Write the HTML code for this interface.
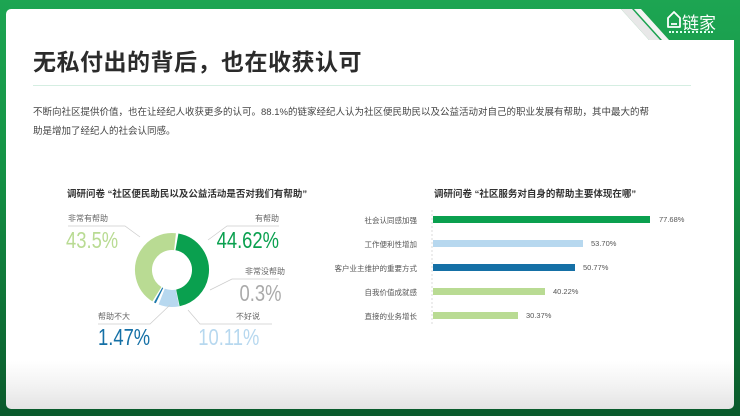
<!DOCTYPE html><html><head><meta charset="utf-8"><style>
*{margin:0;padding:0;box-sizing:border-box}
body{width:740px;height:416px;overflow:hidden;background:linear-gradient(#1da552 0%,#149245 40%,#0a5a2c 100%);font-family:"Liberation Sans","Noto Sans CJK SC",sans-serif;position:relative}
.card{position:absolute;left:6px;top:9px;width:728px;height:400px;background:linear-gradient(#fff 0%,#fff 88%,#f3f3f3 94%,#e4e4e4 100%);border-radius:5px;clip-path:polygon(0 0,615px 0,643px 31px,728px 31px,728px 100%,0 100%)}
.t{position:absolute;color:#333;white-space:nowrap}
.logo{position:absolute;left:682px;top:9px;color:#fff;font-size:17px;font-family:"Noto Sans CJK SC",sans-serif}
.sub{position:absolute;left:669px;top:31px;width:44px;height:2px;border-top:2px dotted #dfe}
.n{position:absolute;font-size:23px;white-space:nowrap;transform:scaleX(0.8);line-height:1}
.l{transform-origin:left}.r{transform-origin:right;text-align:right}
</style></head><body>
<div class="card"></div>
<svg style="position:absolute;left:0;top:0" width="740" height="60"><polygon points="621,9 632,9 660,40 649,40" fill="#e8e8e8"/><polygon points="634,9 641,9 669,40 662,40" fill="#f3f3f3"/>
<path d="M668,27 L668,18 L674,12 L680,18 L680,27 Z M671,24 L677,24" stroke="#fff" stroke-width="1.8" fill="none" stroke-linejoin="round"/></svg>
<div class="logo">链家</div>
<div class="sub"></div>
<div class="t" style="left:33px;top:43px;font-size:23px;font-weight:bold;color:#2b2b2b;letter-spacing:0.5px">无私付出的背后，也在收获认可</div>
<div style="position:absolute;left:33px;top:85px;width:658px;height:1px;background:#d5eee2"></div>
<div class="t" style="left:33px;top:103px;font-size:9.5px;color:#444;line-height:19px">不断向社区提供价值，也在让经纪人收获更多的认可。88.1%的链家经纪人认为社区便民助民以及公益活动对自己的职业发展有帮助，其中最大的帮<br>助是增加了经纪人的社会认同感。</div>
<div class="t" style="left:67px;top:186px;font-size:9.5px;font-weight:bold">调研问卷 “社区便民助民以及公益活动是否对我们有帮助”</div>
<svg style="position:absolute;left:0;top:0" width="740" height="416">
<g transform="translate(172,270)" stroke-width="17" fill="none">
<circle r="28.5" stroke="#0aa04f" stroke-dasharray="78.5 200" transform="rotate(-80)"/>
<circle r="28.5" stroke="#b7d8ef" stroke-dasharray="16 200" transform="rotate(79)"/>
<circle r="28.5" stroke="#1b78ac" stroke-dasharray="1.6 200" transform="rotate(116)"/>
<circle r="28.5" stroke="#b9db93" stroke-dasharray="76.5 200" transform="rotate(122)"/>
</g>
<g stroke="#ccc" stroke-width="0.7" fill="none">
<polyline points="68,226 125,226 140,237"/><polyline points="279,226 227,226 208,240"/>
<polyline points="279,279 232,279 210,290"/><polyline points="98,324 150,324 170,305"/>
<polyline points="272,324 200,324 188,310"/>
<line x1="432" y1="210" x2="432" y2="325" stroke-dasharray="2 2"/>
</g>
<rect x="433" y="216" width="217" height="7" fill="#0aa04f"/>
<rect x="433" y="240" width="150" height="7" fill="#b7d8ef"/>
<rect x="433" y="264" width="142" height="7" fill="#1570a6"/>
<rect x="433" y="288" width="112" height="7" fill="#b9db93"/>
<rect x="433" y="312" width="85" height="7" fill="#b9db93"/>
</svg>
<div class="t" style="left:68px;top:213px;font-size:8px;color:#666">非常有帮助</div>
<div class="n l" style="left:66px;top:229px;color:#b9db93">43.5%</div>
<div class="t" style="left:255px;top:213px;font-size:8px;color:#666">有帮助</div>
<div class="n r" style="right:461px;top:229px;color:#0aa04f">44.62%</div>
<div class="t" style="left:245px;top:266px;font-size:8px;color:#666">非常没帮助</div>
<div class="n r" style="right:459px;top:282px;color:#aaa">0.3%</div>
<div class="t" style="left:98px;top:311px;font-size:8px;color:#666">帮助不大</div>
<div class="n l" style="left:98px;top:326px;color:#1570a6">1.47%</div>
<div class="t" style="left:236px;top:311px;font-size:8px;color:#666">不好说</div>
<div class="n r" style="right:481px;top:326px;color:#b7d8ef">10.11%</div>
<div class="t" style="left:434px;top:186px;font-size:9.5px;font-weight:bold">调研问卷 “社区服务对自身的帮助主要体现在哪”</div>
<div class="t" style="left:330px;top:215px;width:87px;text-align:right;font-size:7.5px;color:#555">社会认同感加强</div>
<div class="t" style="left:330px;top:239px;width:87px;text-align:right;font-size:7.5px;color:#555">工作便利性增加</div>
<div class="t" style="left:310px;top:263px;width:107px;text-align:right;font-size:7.5px;color:#555">客户业主维护的重要方式</div>
<div class="t" style="left:330px;top:287px;width:87px;text-align:right;font-size:7.5px;color:#555">自我价值成就感</div>
<div class="t" style="left:330px;top:311px;width:87px;text-align:right;font-size:7.5px;color:#555">直接的业务增长</div>
<div class="t" style="left:659px;top:215px;font-size:7.5px;color:#555">77.68%</div>
<div class="t" style="left:591px;top:239px;font-size:7.5px;color:#555">53.70%</div>
<div class="t" style="left:583px;top:263px;font-size:7.5px;color:#555">50.77%</div>
<div class="t" style="left:553px;top:287px;font-size:7.5px;color:#555">40.22%</div>
<div class="t" style="left:526px;top:311px;font-size:7.5px;color:#555">30.37%</div>
</body></html>
